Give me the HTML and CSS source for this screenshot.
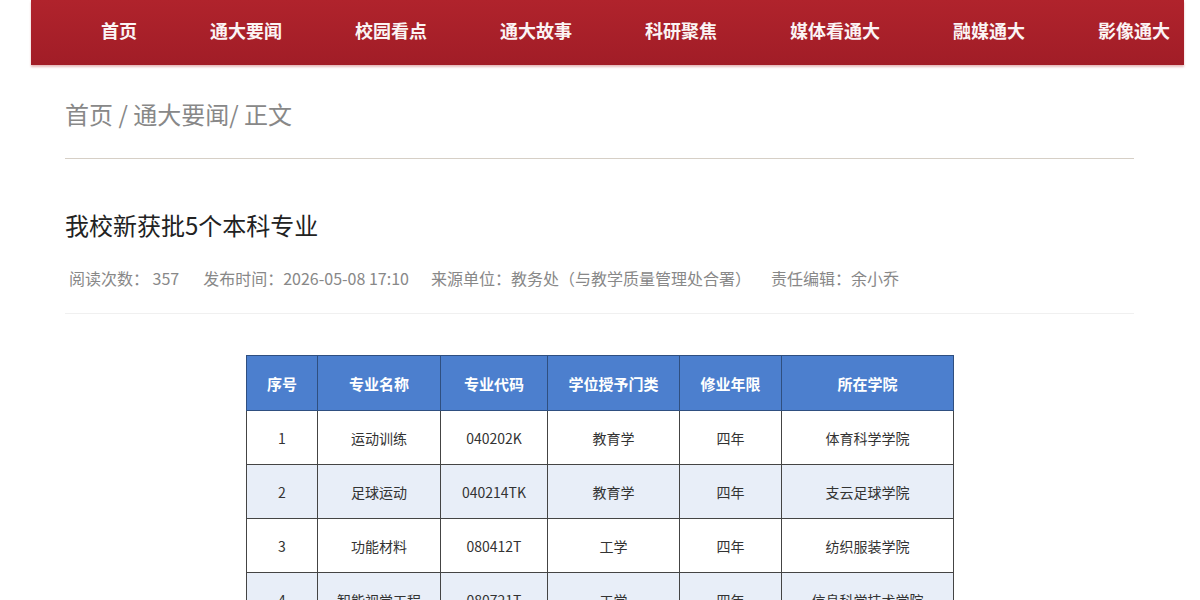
FILE: index.html
```html
<!DOCTYPE html>
<html lang="zh-CN">

<head>
	<meta charset="UTF-8">
	<title>我校新获批5个本科专业</title>
	<link rel="stylesheet" href="styles.css">
</head>

<body>
	<nav class="topnav">
		<a href="#">首页</a>
		<a href="#">通大要闻</a>
		<a href="#">校园看点</a>
		<a href="#">通大故事</a>
		<a href="#">科研聚焦</a>
		<a href="#">媒体看通大</a>
		<a href="#">融媒通大</a>
		<a href="#">影像通大</a>
	</nav>

	<main class="page">
		<div class="crumbs">首页 / 通大要闻/ 正文</div>

		<h1 class="title">我校新获批5个本科专业</h1>
		<div class="meta">
			<span class="views">阅读次数：&nbsp;357</span>
			<span class="date">发布时间：2026-05-08 17:10</span>
			<span class="source">来源单位：教务处（与教学质量管理处合署）</span>
			<span class="editor">责任编辑：余小乔</span>
		</div>

		<table class="majors">
			<thead>
				<tr>
					<th class="c-no">序号</th>
					<th class="c-name">专业名称</th>
					<th class="c-code">专业代码</th>
					<th class="c-type">学位授予门类</th>
					<th class="c-year">修业年限</th>
					<th class="c-school">所在学院</th>
				</tr>
			</thead>
			<tbody>
				<tr>
					<td>1</td>
					<td>运动训练</td>
					<td>040202K</td>
					<td>教育学</td>
					<td>四年</td>
					<td>体育科学学院</td>
				</tr>
				<tr>
					<td>2</td>
					<td>足球运动</td>
					<td>040214TK</td>
					<td>教育学</td>
					<td>四年</td>
					<td>支云足球学院</td>
				</tr>
				<tr>
					<td>3</td>
					<td>功能材料</td>
					<td>080412T</td>
					<td>工学</td>
					<td>四年</td>
					<td>纺织服装学院</td>
				</tr>
				<tr>
					<td>4</td>
					<td>智能视觉工程</td>
					<td>080721T</td>
					<td>工学</td>
					<td>四年</td>
					<td>信息科学技术学院</td>
				</tr>
			</tbody>
		</table>
	</main>
</body>

</html>
```

FILE: styles.css
```css
body {
	font-family: "Noto Sans CJK SC", "Liberation Sans", sans-serif;
	background-color: #fff;
	color: #222;
	margin: 0;
	padding: 0;
}

.topnav {
	display: flex;
	align-items: center;
	gap: 73px;
	width: 1153px;
	height: 65px;
	margin-left: 31px;
	padding: 0 0 6px 70px;
	box-sizing: border-box;
	background: linear-gradient(#b0232c, #a11d27);
	box-shadow: 0 2px 2px rgba(180, 60, 60, 0.35);
}

.topnav a {
	color: #fbf4f4;
	font-size: 18px;
	font-weight: bold;
	text-decoration: none;
	white-space: nowrap;
}

.page {
	width: 1069px;
	margin-left: 65px;
}

.crumbs {
	font-size: 24px;
	color: #888;
	line-height: 36px;
	padding: 31px 0 26px;
	border-bottom: 1px solid #d6cfc6;
}

.title {
	font-size: 24px;
	font-weight: normal;
	color: #222;
	margin: 48px 0 0;
	line-height: 36px;
}

.meta {
	display: flex;
	font-size: 16px;
	color: #888;
	line-height: 24px;
	margin-top: 23px;
	padding: 0 0 23px 4px;
	border-bottom: 1px solid #f0f0f0;
}

.meta .date {
	margin-left: 24px;
}

.meta .source {
	margin-left: 22px;
}

.meta .editor {
	margin-left: 20px;
}

.majors {
	border-collapse: collapse;
	table-layout: fixed;
	margin: 41px 0 0 181px;
	width: 708px;
	font-size: 14px;
	color: #333;
	text-align: center;
}

.majors th,
.majors td {
	padding: 0;
}

.majors th {
	background-color: #4c7fce;
	color: #fff;
	font-size: 15px;
	font-weight: bold;
	height: 54px;
	border: 1px solid #2f4f80;
}

.majors td {
	height: 53px;
	border: 1px solid #444;
}

.majors tbody tr:nth-child(even) td {
	background-color: #e8eef8;
}

.c-no { width: 70px; }
.c-name { width: 122px; }
.c-code { width: 106px; }
.c-type { width: 131px; }
.c-year { width: 101px; }
```
